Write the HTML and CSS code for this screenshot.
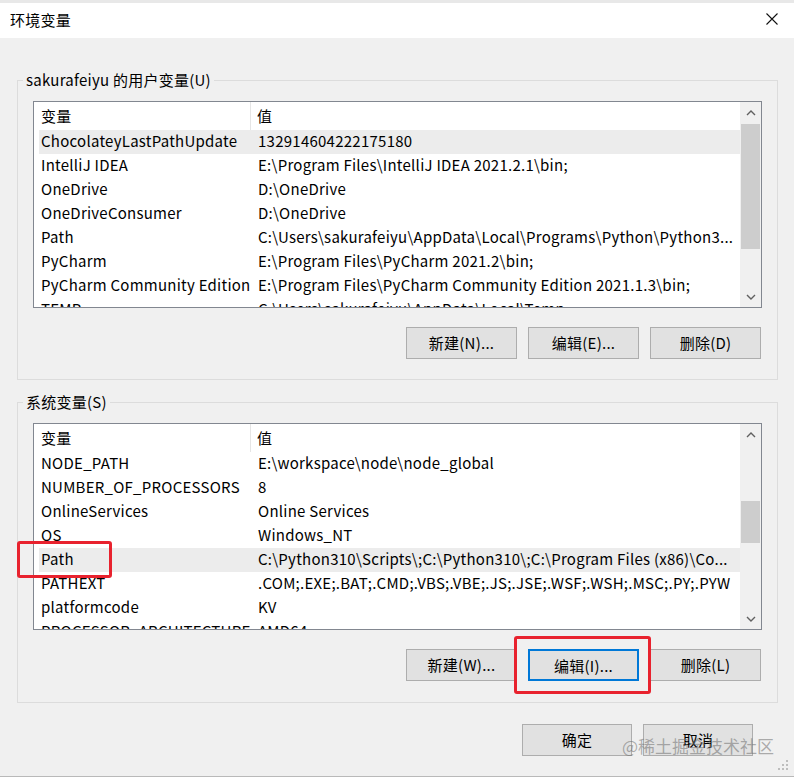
FILE: index.html
```html
<!DOCTYPE html>
<html lang="zh">
<head>
<meta charset="utf-8">
<title>环境变量</title>
<link rel="stylesheet" href="styles.css">
</head>
<body>
<div class="window">
  <div class="titlebar">
    <span class="title">环境变量</span>
    <svg class="close" width="12" height="12" viewBox="0 0 12 12"><path d="M0.5 0.5L11.5 11.5M11.5 0.5L0.5 11.5" stroke="#111" stroke-width="1.1" fill="none"/></svg>
  </div>
  <div class="content">
    <fieldset class="group">
      <legend>sakurafeiyu 的用户变量(U)</legend>
      <div class="list">
        <div class="list-main">
          <div class="header"><div class="hcol1">变量</div><div class="hcol2">值</div></div>
          <div class="rows">
            <div class="row selected"><div class="c1">ChocolateyLastPathUpdate</div><div class="c2">132914604222175180</div></div>
            <div class="row"><div class="c1">IntelliJ IDEA</div><div class="c2">E:\Program Files\IntelliJ IDEA 2021.2.1\bin;</div></div>
            <div class="row"><div class="c1">OneDrive</div><div class="c2">D:\OneDrive</div></div>
            <div class="row"><div class="c1">OneDriveConsumer</div><div class="c2">D:\OneDrive</div></div>
            <div class="row"><div class="c1">Path</div><div class="c2">C:\Users\sakurafeiyu\AppData\Local\Programs\Python\Python3...</div></div>
            <div class="row"><div class="c1">PyCharm</div><div class="c2">E:\Program Files\PyCharm 2021.2\bin;</div></div>
            <div class="row"><div class="c1">PyCharm Community Edition</div><div class="c2">E:\Program Files\PyCharm Community Edition 2021.1.3\bin;</div></div>
            <div class="row"><div class="c1">TEMP</div><div class="c2">C:\Users\sakurafeiyu\AppData\Local\Temp</div></div>
          </div>
        </div>
        <div class="scrollbar">
          <div class="arrow"><svg width="10" height="6" viewBox="0 0 10 6"><path d="M1 5L5 1L9 5" stroke="#606060" stroke-width="1.4" fill="none"/></svg></div>
          <div class="track"><div class="thumb thumb-user"></div></div>
          <div class="arrow"><svg width="10" height="6" viewBox="0 0 10 6"><path d="M1 1L5 5L9 1" stroke="#606060" stroke-width="1.4" fill="none"/></svg></div>
        </div>
      </div>
      <div class="buttons">
        <button class="btn">新建(N)...</button>
        <button class="btn">编辑(E)...</button>
        <button class="btn">删除(D)</button>
      </div>
    </fieldset>

    <fieldset class="group group-sys">
      <legend>系统变量(S)</legend>
      <div class="list">
        <div class="list-main">
          <div class="header"><div class="hcol1">变量</div><div class="hcol2">值</div></div>
          <div class="rows">
            <div class="row"><div class="c1">NODE_PATH</div><div class="c2">E:\workspace\node\node_global</div></div>
            <div class="row"><div class="c1">NUMBER_OF_PROCESSORS</div><div class="c2">8</div></div>
            <div class="row"><div class="c1">OnlineServices</div><div class="c2">Online Services</div></div>
            <div class="row"><div class="c1">OS</div><div class="c2">Windows_NT</div></div>
            <div class="row selected"><div class="c1">Path</div><div class="c2">C:\Python310\Scripts\;C:\Python310\;C:\Program Files (x86)\Co...</div></div>
            <div class="row"><div class="c1">PATHEXT</div><div class="c2">.COM;.EXE;.BAT;.CMD;.VBS;.VBE;.JS;.JSE;.WSF;.WSH;.MSC;.PY;.PYW</div></div>
            <div class="row"><div class="c1">platformcode</div><div class="c2">KV</div></div>
            <div class="row"><div class="c1">PROCESSOR_ARCHITECTURE</div><div class="c2">AMD64</div></div>
          </div>
        </div>
        <div class="scrollbar">
          <div class="arrow"><svg width="10" height="6" viewBox="0 0 10 6"><path d="M1 5L5 1L9 5" stroke="#606060" stroke-width="1.4" fill="none"/></svg></div>
          <div class="track"><div class="thumb thumb-sys"></div></div>
          <div class="arrow"><svg width="10" height="6" viewBox="0 0 10 6"><path d="M1 1L5 5L9 1" stroke="#606060" stroke-width="1.4" fill="none"/></svg></div>
        </div>
      </div>
      <div class="buttons buttons-sys">
        <button class="btn">新建(W)...</button>
        <button class="btn focused">编辑(I)...</button>
        <button class="btn">删除(L)</button>
      </div>
    </fieldset>

    <div class="footer">
      <button class="btn btn-footer">确定</button>
      <button class="btn btn-footer">取消</button>
    </div>
  </div>

  <div class="mark mark-path"></div>
  <div class="mark mark-edit"></div>
  <div class="watermark">@稀土掘金技术社区</div>
  <svg class="grip" width="12" height="12" viewBox="0 0 12 12">
    <rect x="8" y="0" width="2" height="2" fill="#bdbdbd"/>
    <rect x="4" y="4" width="2" height="2" fill="#bdbdbd"/>
    <rect x="8" y="4" width="2" height="2" fill="#bdbdbd"/>
    <rect x="0" y="8" width="2" height="2" fill="#bdbdbd"/>
    <rect x="4" y="8" width="2" height="2" fill="#bdbdbd"/>
    <rect x="8" y="8" width="2" height="2" fill="#bdbdbd"/>
  </svg>
</div>
</body>
</html>
```

FILE: styles.css
```css
* { box-sizing: border-box; }

html, body {
  margin: 0;
  padding: 0;
  background: #f0f0f0;
}

body {
  font-family: "Noto Sans CJK SC", "Noto Sans", sans-serif;
  font-size: 15px;
  letter-spacing: 0.25px;
  color: #000;
}

.window {
  position: relative;
  width: 794px;
  height: 777px;
  background: #f0f0f0;
  border-bottom: 1px solid #b9b9b9;
  overflow: hidden;
}

.titlebar {
  height: 38px;
  background: #fff;
  border-top: 3px solid #e8e8e8;
  display: flex;
  align-items: center;
  justify-content: space-between;
  padding: 0 16px 0 10px;
}

.title {
  font-size: 15px;
  line-height: 20px;
  margin-top: -2px;
}

.close {
  display: block;
  margin-top: -4px;
}

.content {
  padding: 32px 16px 0 17px;
}

.group {
  margin: 0;
  border: 1px solid #dcdcdc;
  padding: 11px 15px 20px 15px;
  min-width: 0;
}

.group legend {
  padding: 0 3px;
  margin-left: -10px;
  line-height: 20px;
  font-size: 15px;
}

.group-sys {
  margin-top: 12px;
  padding-bottom: 21px;
}

.list {
  height: 207px;
  border: 1px solid #828790;
  background: #fff;
  display: flex;
}

.list-main {
  flex: 1;
  min-width: 0;
  overflow: hidden;
}

.header {
  height: 28px;
  display: flex;
  line-height: 28px;
}

.hcol1 {
  width: 217px;
  flex: none;
  padding-left: 7px;
  border-right: 1px solid #e5e5e5;
}

.hcol2 {
  padding-left: 6px;
}

.rows {
  margin-left: 5px;
}

.row {
  height: 24px;
  line-height: 22px;
  display: flex;
  white-space: nowrap;
}

.row.selected {
  background: #ececec;
}

.c1 {
  width: 212px;
  flex: none;
  padding-left: 2px;
  overflow: hidden;
}

.c2 {
  flex: 1;
  min-width: 0;
  padding-left: 7px;
  overflow: hidden;
}

.scrollbar {
  width: 21px;
  flex: none;
  background: #f0f0f0;
  display: flex;
  flex-direction: column;
}

.arrow {
  height: 21px;
  display: flex;
  align-items: center;
  justify-content: center;
}

.track {
  flex: 1;
  padding: 0 1px;
}

.thumb {
  background: #cdcdcd;
}

.thumb-user {
  margin-top: 1px;
  height: 125px;
}

.thumb-sys {
  margin-top: 56px;
  height: 42px;
}

.buttons {
  display: flex;
  justify-content: flex-end;
  gap: 11px;
  margin-top: 19px;
  margin-right: 1px;
}

.buttons-sys {
  margin-top: 19px;
}

.btn {
  width: 111px;
  height: 32px;
  background: #e1e1e1;
  border: 1px solid #adadad;
  font-family: "Noto Sans CJK SC", "Noto Sans", sans-serif;
  font-size: 15px;
  letter-spacing: 0.25px;
  color: #000;
  padding: 0;
  margin: 0;
  line-height: 30px;
}

.btn.focused {
  border: 2px solid #0078d7;
}

.footer {
  display: flex;
  justify-content: flex-end;
  gap: 11px;
  margin-top: 21px;
  margin-right: 25px;
}

.btn-footer {
  width: 110px;
}

.mark {
  position: absolute;
  border: 3px solid #e8222e;
  border-radius: 3px;
}

.mark-path {
  left: 17px;
  top: 541px;
  width: 95px;
  height: 37px;
}

.mark-edit {
  left: 514px;
  top: 636px;
  width: 137px;
  height: 58px;
}

.watermark {
  position: absolute;
  left: 622px;
  top: 734px;
  font-size: 17px;
  line-height: 24px;
  letter-spacing: 0;
  color: rgba(110, 110, 110, 0.55);
  white-space: nowrap;
}

.grip {
  position: absolute;
  right: 4px;
  bottom: 4px;
}
```
